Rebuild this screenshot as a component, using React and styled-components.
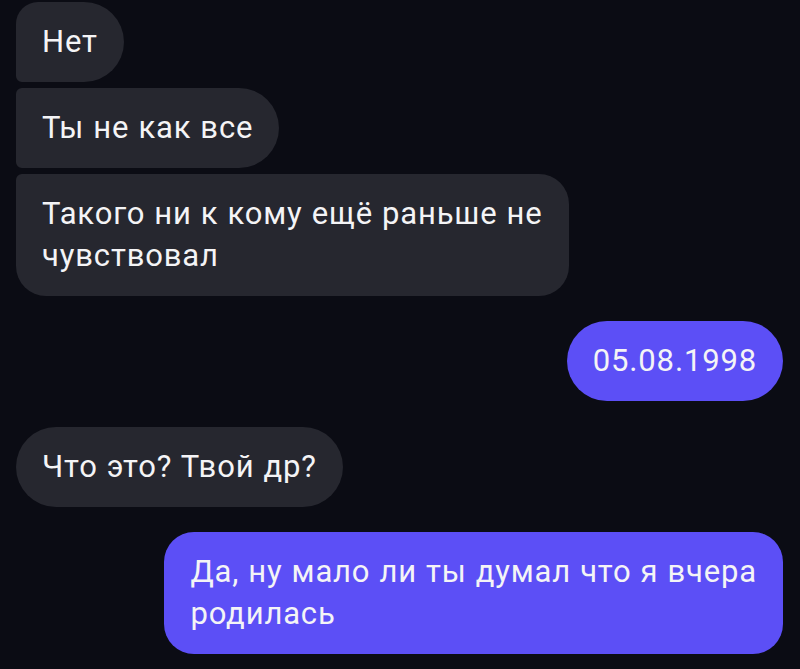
import React from 'react';
import styled, { createGlobalStyle } from 'styled-components';

const GlobalStyle = createGlobalStyle`
  html, body {
    margin: 0;
    padding: 0;
    background: #0b0c14;
  }
  body {
    font-family: Roboto, "Noto Sans", sans-serif;
  }
`;

const Chat = styled.div`
  display: flex;
  flex-direction: column;
  width: 800px;
  height: 669px;
  box-sizing: border-box;
  padding: 2px 17px 0 16px;
  background: #0b0c14;
  overflow: hidden;
`;

const Group = styled.div`
  display: flex;
  flex-direction: column;
  align-items: ${(p) => (p.$out ? 'flex-end' : 'flex-start')};
  gap: 6px;
  margin-top: ${(p) => p.$space || 0}px;
`;

const Bubble = styled.div`
  box-sizing: border-box;
  width: fit-content;
  padding: 19px 26px;
  font-size: 31px;
  line-height: 42px;
  letter-spacing: 0.85px;
  word-spacing: 0.5px;
  color: #f4f4f6;
  white-space: nowrap;
  background: ${(p) => (p.$out ? '#5c4ff6' : '#26272f')};
  border-radius: ${(p) => p.$radius};
`;

const messages = [
  {
    out: false,
    space: 0,
    items: [
      { text: ['Нет'], radius: '22px 40px 40px 6px' },
      { text: ['Ты не как все'], radius: '6px 40px 40px 6px' },
      {
        text: ['Такого ни к кому ещё раньше не', 'чувствовал'],
        radius: '6px 30px 30px 30px',
      },
    ],
  },
  {
    out: true,
    space: 25,
    items: [{ text: ['05.08.1998'], radius: '41px' }],
  },
  {
    out: false,
    space: 26,
    items: [{ text: ['Что это? Твой др?'], radius: '40px' }],
  },
  {
    out: true,
    space: 25,
    items: [
      { text: ['Да, ну мало ли ты думал что я вчера', 'родилась'], radius: '30px' },
    ],
  },
];

const App = () => {
  return (
    <>
      <GlobalStyle />
      <Chat>
        {messages.map((group, gi) => (
          <Group key={gi} $out={group.out} $space={group.space}>
            {group.items.map((msg, mi) => (
              <Bubble key={mi} $out={group.out} $radius={msg.radius}>
                {msg.text.map((line, li) => (
                  <React.Fragment key={li}>
                    {li > 0 && <br />}
                    {line}
                  </React.Fragment>
                ))}
              </Bubble>
            ))}
          </Group>
        ))}
      </Chat>
    </>
  );
};

export default App;
